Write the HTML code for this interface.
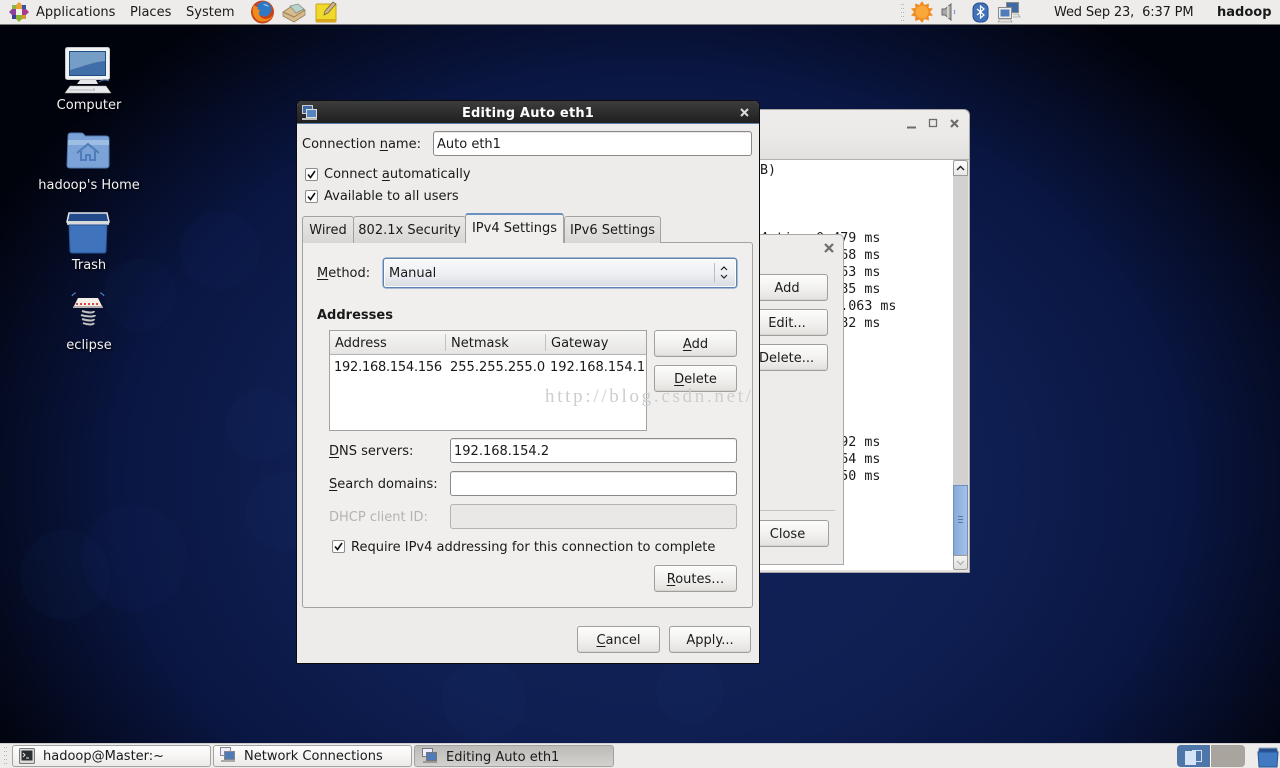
<!DOCTYPE html>
<html><head><meta charset="utf-8"><title>Editing Auto eth1</title>
<style>
*{box-sizing:border-box}
html,body{margin:0;padding:0;width:1280px;height:768px;overflow:hidden}
body{position:relative;font-family:"DejaVu Sans","Liberation Sans",sans-serif;font-size:13px;color:#1a1a1a;background:#0a1538}
.a,.t,.b,.e,svg{position:absolute}
.t{white-space:nowrap;line-height:18px;height:18px;margin-top:2px}
.d{color:#f4f4f4;text-shadow:1px 1px 2px #000;width:178px;left:0;text-align:center}
.b{border:1px solid #a09f9c;border-radius:3px;background:linear-gradient(#fdfdfc,#f1f0ee 55%,#e2e1de);text-align:center;line-height:27px;white-space:nowrap;box-shadow:inset 0 -1px 0 #d5d4d1}
.e{border:1px solid #8b8a88;border-radius:3px;background:#fff;box-shadow:inset 0 1px 0 #e8e8e8}
.m{font-family:"DejaVu Sans Mono","Liberation Mono",monospace;font-size:13.33px}
.tab{position:absolute;top:216px;height:27px;border:1px solid #a3a2a0;border-bottom:0;border-radius:3px 3px 0 0;background:linear-gradient(#e9e8e6,#d8d7d4);line-height:28px;text-align:center;white-space:nowrap}
.cb{position:absolute;width:13px;height:13px;border:1px solid #8d8c8a;border-radius:2px;background:#fff}
.tb{position:absolute;top:745px;height:22px;border:1px solid #a3a2a0;border-radius:3px;background:linear-gradient(#fff,#ecebe9);white-space:nowrap}
u{text-decoration:underline;text-underline-offset:2px}
</style></head><body>

<div class="a" style="left:0;top:0;width:1280px;height:768px;background:radial-gradient(ellipse 740px 570px at 650px 480px,#11225a 0,#0f1f52 45%,#0a1642 72%,#01030c 100%)"></div>
<svg style="left:0;top:0" width="1280" height="768" fill="#2a4080" fill-opacity=".06">
<circle cx="134" cy="558" r="53"/><circle cx="65" cy="575" r="45"/><circle cx="220" cy="250" r="40"/><circle cx="140" cy="295" r="36"/><circle cx="484" cy="700" r="42"/><circle cx="285" cy="512" r="40"/><circle cx="262" cy="425" r="36"/><circle cx="690" cy="690" r="34"/>
</svg>

<!-- top panel -->
<div class="a" style="left:0;top:0;width:1280px;height:25px;background:#edecea;border-bottom:1px solid #7d7c7a"></div>
<svg style="left:8px;top:1px" width="22" height="22" viewBox="0 0 22 22">
<path d="M11 1l3 3v4h-6V4z" fill="#e8a23a"/><path d="M21 11l-3 3h-4V8h4z" fill="#a53c8c"/><path d="M11 21l-3-3v-4h6v4z" fill="#8bb52e"/><path d="M1 11l3-3h4v6H4z" fill="#8b3f9a"/>
<path d="M4 4h4v4H4z" fill="#8fb83a"/><path d="M14 4h4v4h-4z" fill="#3f4fa0"/><path d="M14 14h4v4h-4z" fill="#d49a35"/><path d="M4 14h4v4H4z" fill="#3b3f98"/><path d="M8 8h6v6H8z" fill="#f2efe9"/>
</svg>
<div class="t" style="left:36px;top:2px">Applications</div>
<div class="t" style="left:130px;top:2px">Places</div>
<div class="t" style="left:186px;top:2px">System</div>
<svg style="left:250px;top:0" width="25" height="24" viewBox="0 0 25 24">
<circle cx="12.500" cy="12" r="11.500" fill="#c8431a"/><circle cx="14" cy="9" r="7.500" fill="#2f78c4"/><path d="M4 5c-3 6-1 13 5 16 6 2 12-1 14-6-3 4-8 5-11 3-3-2-4-5-2-8-2 0-3-1-2-3-1 0-2 0-4-2z" fill="#ef8a1c"/><path d="M13 4c3 0 5 1 6 3-2-1-4-1-6-3z" fill="#9fd0ee"/>
</svg>
<svg style="left:282px;top:2px" width="24" height="21" viewBox="0 0 24 21">
<path d="M1 10l9-6 13 4v5l-11 7-11-6z" fill="#d8bb8c" stroke="#9b8056" stroke-width=".8"/><path d="M8 4l8-2 6 5-8 4z" fill="#b9d2cc" stroke="#7f8f86" stroke-width=".8"/><path d="M1 10l11 5 11-7" fill="none" stroke="#9b8056"/>
</svg>
<svg style="left:315px;top:1px" width="23" height="22" viewBox="0 0 23 22">
<rect x="1" y="3" width="20" height="18" rx="1" fill="#f0d92a" stroke="#c8a21a"/><rect x="1" y="18" width="20" height="3" fill="#d9a81f"/><path d="M9 14l1-4L18 1l3 2-8 9z" fill="#c9b68a" stroke="#6b5b3a" stroke-width=".7"/>
</svg>
<svg style="left:900px;top:2px" width="5" height="20" fill="#b5b4b1"><rect x="1" y="2" width="1" height="1"/><rect x="3" y="2" width="1" height="1"/><rect x="1" y="6" width="1" height="1"/><rect x="3" y="6" width="1" height="1"/><rect x="1" y="10" width="1" height="1"/><rect x="3" y="10" width="1" height="1"/><rect x="1" y="14" width="1" height="1"/><rect x="3" y="14" width="1" height="1"/><rect x="1" y="18" width="1" height="1"/><rect x="3" y="18" width="1" height="1"/></svg>
<svg style="left:911px;top:1px" width="22" height="22" viewBox="0 0 22 22"><path d="M11 0l2.500 4L18 2.500l-.5 4.500 4.500.5L19 11l3 3.500-4.500.5.500 4.500-4.500-1.500L11 22l-2.500-3.500L4 20l.5-4.500L0 14.500 3 11 0 7.500 4.500 7 4 2.500 8.500 4z" fill="#f08a1e"/><circle cx="11" cy="11" r="6.500" fill="#f9a63a"/></svg>
<svg style="left:940px;top:2px" width="18" height="20" viewBox="0 0 18 20"><path d="M2 7h3l6-5v16l-6-5H2z" fill="#a9a8a4" stroke="#6a6965"/><path d="M8 4v12" stroke="#dededc" stroke-width="1.500"/><path d="M14 8c1 1 1 3 0 4" fill="none" stroke="#6c8cc0"/></svg>
<svg style="left:972px;top:2px" width="17" height="21" viewBox="0 0 17 21"><rect x="1" y="1" width="15" height="19" rx="6" fill="#3f72b8" stroke="#254f8c"/><path d="M5 7l7 6-3.500 3V4L12 7l-7 6" fill="none" stroke="#fff" stroke-width="1.200"/></svg>
<svg style="left:997px;top:1px" width="24" height="22" viewBox="0 0 24 22"><rect x="9.500" y="1.500" width="12" height="10" fill="#3f6aa5" stroke="#8a8a88"/><rect x="1.500" y="6.500" width="13" height="11" fill="#ecedee" stroke="#8a8a88"/><rect x="3.500" y="8.500" width="9" height="7" fill="#4f7cb8"/><path d="M1 21l2-3h10l2 3z" fill="#e4e4e4" stroke="#8a8a88" stroke-width=".6"/><path d="M16 13h5l2 3h-7" fill="#e4e4e4" stroke="#8a8a88" stroke-width=".6"/></svg>
<div class="t" style="left:1054px;top:2px;letter-spacing:-.15px">Wed Sep 23,&nbsp; 6:37 PM</div>
<div class="t" style="left:1217px;top:2px;font-weight:bold">hadoop</div>

<!-- desktop icons -->
<svg style="left:64px;top:46px" width="48" height="48" viewBox="0 0 48 48">
<rect x="1.500" y="1.500" width="44" height="32" rx="2" fill="#f2f3f4" stroke="#c4c7cb"/><rect x="5.500" y="5.500" width="36" height="24" fill="#3f6ea8" stroke="#1f4b86"/><path d="M6 6h35v9c-12 1-20 5-35 9z" fill="#8fb0d3" opacity=".7"/><path d="M13 38h21l-2-4H16z" fill="#e6e7e8"/><path d="M1 47l5-7h36l5 7z" fill="#e8e9ea" stroke="#a8a8a8" stroke-width=".5"/><path d="M5 44h26M30 42v3" stroke="#b9b9b9"/><path d="M35 36c3-2 6-3 10-1" fill="none" stroke="#3f6ea8"/>
</svg>
<div class="t d" style="top:95px">Computer</div>
<svg style="left:66px;top:131px" width="44" height="38" viewBox="0 0 44 38">
<path d="M2 5c0-2 1-3 3-3h10c2 0 3 1 4 3h21c2 0 3 1 3 3v26c0 2-1 3-3 3H4c-2 0-3-1-3-3z" fill="#7ba3d7" stroke="#4f7bb3"/><path d="M2 9h41v5H2z" fill="#9ebde3"/><path d="M11 22l11-9 11 9M15 20v9h5v-5h4v5h5v-9" fill="none" stroke="#4e7cb8" stroke-width="2"/>
</svg>
<div class="t d" style="top:175px">hadoop's Home</div>
<svg style="left:66px;top:210px" width="44" height="44" viewBox="0 0 44 44">
<path d="M3 3h38l2 9H1z" fill="#234b8c" stroke="#e8e8e8" stroke-width="1.500"/><rect x="1" y="11" width="42" height="4" rx="1" fill="#d8dadc"/><path d="M3 15h38l-1 26c0 1-1 2-2 2H6c-1 0-2-1-2-2z" fill="#3f73bb" stroke="#2a5494"/>
</svg>
<div class="t d" style="top:255px">Trash</div>
<svg style="left:70px;top:291px" width="36" height="36" viewBox="0 0 36 36">
<path d="M3 17L8 7h20l5 10z" fill="#f3eee8"/><path d="M6 13h24" stroke="#e8413a" stroke-width="2" stroke-dasharray="2 2"/><path d="M3 16h30" stroke="#999" stroke-width="1.500"/>
<path d="M12 20c6 2 12 2 12 0M11 24c6 2 14 2 14 0M12 28c6 2 12 2 12 0M13 32c5 2 10 2 11 0" fill="none" stroke="#c0c0c0" stroke-width="2"/>
<path d="M2 5c1-2 3-3 4-3M34 5c-1-2-3-3-4-3" fill="none" stroke="#4f7cb8" stroke-width="1.200"/>
</svg>
<div class="t d" style="top:335px">eclipse</div>

<!-- back window -->
<div class="a" style="left:730px;top:109px;width:240px;height:464px;background:#e6e5e3;border:1px solid #a8a7a5;border-radius:0 6px 0 0"></div>
<div class="a" style="left:730px;top:110px;width:239px;height:50px;border-radius:0 6px 0 0;background:linear-gradient(#edecea,#ebeae8 50%,#e2e1df);border-bottom:1px solid #b4b3b1"></div>
<svg style="left:905px;top:117px" width="55" height="14" stroke="#6d6c6a" fill="none"><path d="M2 10.500h9" stroke-width="2"/><rect x="24.500" y="2.500" width="7" height="7" stroke-width="1.300"/><path d="M46 3l7 7M53 3l-7 7" stroke-width="2.200"/></svg>
<div class="a" style="left:730px;top:160px;width:223px;height:410px;background:#fff"></div>
<div class="a" style="left:953px;top:160px;width:15px;height:410px;background:#d2d1cf"></div>
<div class="a" style="left:953px;top:160px;width:15px;height:16px;background:linear-gradient(#fff,#e8e7e5);border:1px solid #9c9b99;border-radius:3px 3px 0 0"></div>
<svg style="left:956px;top:165px" width="9" height="6" fill="none" stroke="#222" stroke-width="1.400"><path d="M1 5l3.500-3.500L8 5"/></svg>
<div class="a" style="left:953px;top:485px;width:15px;height:71px;background:linear-gradient(90deg,#86a9dc,#a6c1e8);border:1px solid #6f8fbf"></div>
<svg style="left:957px;top:515px" width="7" height="9" stroke="#5577a8"><path d="M1 1.500h5M1 4.500h5M1 7.500h5"/></svg>
<div class="a" style="left:953px;top:555px;width:15px;height:15px;background:linear-gradient(#f5f5f4,#e0dfdd);border:1px solid #9c9b99;border-radius:0 0 3px 3px"></div>
<svg style="left:956px;top:560px" width="9" height="6" fill="none" stroke="#aaa" stroke-width="1.200"><path d="M1 1l3.500 3.500L8 1"/></svg>
<div class="t m" style="left:760px;top:160px">B)</div>
<div class="t m" style="left:760px;top:228px">4 time=0.479 ms</div>
<div class="t m" style="left:760px;top:245px">4 time=0.568 ms</div>
<div class="t m" style="left:760px;top:262px">4 time=0.563 ms</div>
<div class="t m" style="left:760px;top:279px">4 time=0.585 ms</div>
<div class="t m" style="left:760px;top:296px">4 time=0.1.063 ms</div>
<div class="t m" style="left:760px;top:313px">4 time=0.582 ms</div>
<div class="t m" style="left:760px;top:432px">4 time=0.592 ms</div>
<div class="t m" style="left:760px;top:449px">4 time=0.564 ms</div>
<div class="t m" style="left:760px;top:466px">4 time=0.550 ms</div>

<!-- inner dialog -->
<div class="a" style="left:730px;top:234px;width:114px;height:331px;background:#edecea;border:1px solid #a9a8a6;border-radius:0 5px 0 0"></div>
<svg style="left:824px;top:243px" width="10" height="10" stroke="#6d6c6a" stroke-width="2.200"><path d="M1 1l8 8M9 1l-8 8"/></svg>
<div class="b" style="left:730px;top:274px;width:98px;height:27px;padding-left:16px">Add</div>
<div class="b" style="left:730px;top:309px;width:98px;height:27px;padding-left:16px">Edit...</div>
<div class="b" style="left:730px;top:344px;width:98px;height:27px;padding-left:28px;text-align:left">Delete...</div>
<div class="a" style="left:730px;top:510px;width:105px;height:1px;background:#c4c3c1"></div>
<div class="b" style="left:730px;top:520px;width:99px;height:27px;padding-left:16px">Close</div>

<!-- main dialog -->
<div class="a" style="left:296px;top:100px;width:464px;height:564px;background:#edecea;border:1px solid #0c0c0c;border-radius:6px 6px 0 0"></div>
<div class="a" style="left:297px;top:101px;width:462px;height:23px;background:linear-gradient(#3d3d3d,#1f1f1f);border-radius:5px 5px 0 0;border-bottom:1px solid #5b7fa8"></div>
<svg style="left:302px;top:105px" width="16" height="16" viewBox="0 0 16 16"><rect x="0.500" y="0.500" width="10" height="8" fill="#3f6aa5" stroke="#ccc"/><rect x="4.500" y="4.500" width="10" height="8" fill="#5584c0" stroke="#ddd"/><path d="M0 13h15v2H0z" fill="#bbb"/></svg>
<div class="t" style="left:297px;top:103px;width:462px;text-align:center;color:#fff;font-weight:bold;letter-spacing:.2px">Editing Auto eth1</div>
<svg style="left:740px;top:108px" width="9" height="9" stroke="#ddd" stroke-width="2"><path d="M1 1l7 7M8 1l-7 7"/></svg>

<div class="t" style="left:302px;top:134px">Connection <u>n</u>ame:</div>
<div class="e" style="left:433px;top:131px;width:319px;height:25px"></div>
<div class="t" style="left:437px;top:134px">Auto eth1</div>

<div class="cb" style="left:305px;top:168px"></div>
<svg style="left:305px;top:168px" width="13" height="13" fill="none" stroke="#111" stroke-width="1.600"><path d="M3 6.500l2.500 3L10 3"/></svg>
<div class="t" style="left:324px;top:164px">Connect <u>a</u>utomatically</div>
<div class="cb" style="left:305px;top:190px"></div>
<svg style="left:305px;top:190px" width="13" height="13" fill="none" stroke="#111" stroke-width="1.600"><path d="M3 6.500l2.500 3L10 3"/></svg>
<div class="t" style="left:324px;top:186px">Available to all users</div>

<!-- notebook -->
<div class="a" style="left:302px;top:242px;width:451px;height:366px;background:#f0efed;border:1px solid #a3a2a0;border-radius:0 3px 3px 3px"></div>
<div class="tab" style="left:302px;width:52px">Wired</div>
<div class="tab" style="left:353px;width:113px">802.1x Security</div>
<div class="tab" style="left:564px;width:97px">IPv6 Settings</div>
<div class="tab" style="left:465px;top:213px;width:99px;height:30px;background:#f0efed;border-color:#a3a2a0;border-top:2px solid #6a90c0;line-height:28px">IPv4 Settings</div>

<div class="t" style="left:317px;top:263px"><u>M</u>ethod:</div>
<div class="a" style="left:383px;top:258px;width:354px;height:30px;border:1px solid #5e84b2;border-radius:3px;background:linear-gradient(#f8f9fb,#eef0f4 50%,#d8dce2);box-shadow:inset 0 0 0 1px #fff,0 0 0 .5px #5e84b2"></div>
<div class="a" style="left:714px;top:263px;width:1px;height:19px;background:#b9bcc0"></div>
<svg style="left:719px;top:265px" width="10" height="15" fill="none" stroke="#222" stroke-width="1.200"><path d="M2 5l3-3 3 3M2 10l3 3 3-3"/></svg>
<div class="t" style="left:389px;top:263px">Manual</div>

<div class="t" style="left:317px;top:305px;font-weight:bold">Addresses</div>
<div class="a" style="left:329px;top:330px;width:318px;height:101px;background:#fff;border:1px solid #a3a2a0"></div>
<div class="a" style="left:330px;top:331px;width:316px;height:24px;background:linear-gradient(#f6f6f5,#e6e5e3);border-bottom:1px solid #b4b3b1"></div>
<div class="a" style="left:445px;top:334px;width:1px;height:17px;background:#c4c3c1"></div>
<div class="a" style="left:545px;top:334px;width:1px;height:17px;background:#c4c3c1"></div>
<div class="t" style="left:335px;top:333px">Address</div>
<div class="t" style="left:451px;top:333px">Netmask</div>
<div class="t" style="left:551px;top:333px">Gateway</div>
<div class="t" style="left:334px;top:357px;letter-spacing:-.25px">192.168.154.156</div>
<div class="t" style="left:450px;top:357px">255.255.255.0</div>
<div class="t" style="left:550px;top:357px">192.168.154.1</div>

<div class="b" style="left:654px;top:330px;width:83px;height:27px"><u>A</u>dd</div>
<div class="b" style="left:654px;top:365px;width:83px;height:27px"><u>D</u>elete</div>

<div class="t" style="left:329px;top:441px"><u>D</u>NS servers:</div>
<div class="e" style="left:450px;top:438px;width:287px;height:25px"></div>
<div class="t" style="left:454px;top:441px">192.168.154.2</div>
<div class="t" style="left:329px;top:474px"><u>S</u>earch domains:</div>
<div class="e" style="left:450px;top:471px;width:287px;height:25px"></div>
<div class="t" style="left:329px;top:507px;color:#b4b3b1">DHCP client ID:</div>
<div class="e" style="left:450px;top:504px;width:287px;height:25px;background:#e9e8e6;border-color:#b4b3b1;box-shadow:none"></div>

<div class="cb" style="left:332px;top:540px"></div>
<svg style="left:332px;top:540px" width="13" height="13" fill="none" stroke="#111" stroke-width="1.600"><path d="M3 6.500l2.500 3L10 3"/></svg>
<div class="t" style="left:351px;top:537px">Require IPv4 addressing for this connection to complete</div>
<div class="b" style="left:654px;top:565px;width:83px;height:27px"><u>R</u>outes…</div>
<div class="b" style="left:577px;top:626px;width:83px;height:27px"><u>C</u>ancel</div>
<div class="b" style="left:669px;top:626px;width:82px;height:27px">Apply...</div>

<div class="t" style="left:545px;top:388px;margin-top:0;font-family:'Liberation Serif',serif;font-size:19px;letter-spacing:2.700px;color:#cdcdcd">http://blog.csdn.net/</div>

<!-- bottom panel -->
<div class="a" style="left:0;top:743px;width:1280px;height:25px;background:#edecea;border-top:1px solid #d0cfcd"></div>
<svg style="left:3px;top:746px" width="5" height="20" fill="#b5b4b1"><rect x="1" y="1" width="1" height="1"/><rect x="3" y="1" width="1" height="1"/><rect x="1" y="5" width="1" height="1"/><rect x="3" y="5" width="1" height="1"/><rect x="1" y="9" width="1" height="1"/><rect x="3" y="9" width="1" height="1"/><rect x="1" y="13" width="1" height="1"/><rect x="3" y="13" width="1" height="1"/><rect x="1" y="17" width="1" height="1"/><rect x="3" y="17" width="1" height="1"/></svg>
<div class="tb" style="left:12px;width:199px"></div>
<div class="tb" style="left:213px;width:199px"></div>
<div class="tb" style="left:414px;width:200px;background:linear-gradient(#bdbbb7,#d3d1cd)"></div>
<svg style="left:19px;top:748px" width="16" height="16"><rect x="0.500" y="0.500" width="15" height="15" rx="1" fill="#dcdbd9" stroke="#777"/><rect x="2.500" y="2.500" width="11" height="10" fill="#2b2f33"/><path d="M4 5l2 2-2 2" stroke="#eee" fill="none"/><path d="M7 10h3" stroke="#eee"/></svg>
<svg style="left:220px;top:747px" width="16" height="16"><rect x="0.500" y="0.500" width="10" height="8" fill="#eef" stroke="#888"/><rect x="4.500" y="4.500" width="10" height="8" fill="#4f7cb8" stroke="#888"/><path d="M1 14h14" stroke="#aaa" stroke-width="2"/></svg>
<svg style="left:422px;top:748px" width="16" height="16"><rect x="0.500" y="0.500" width="10" height="8" fill="#eef" stroke="#777"/><rect x="4.500" y="4.500" width="10" height="8" fill="#4f7cb8" stroke="#777"/><path d="M1 14h14" stroke="#999" stroke-width="2"/></svg>
<div class="t" style="left:43px;top:746px">hadoop@Master:~</div>
<div class="t" style="left:244px;top:746px">Network Connections</div>
<div class="t" style="left:446px;top:747px">Editing Auto eth1</div>

<div class="a" style="left:1177px;top:745px;width:68px;height:22px;background:#a9a49e;border-radius:4px"></div>
<div class="a" style="left:1177px;top:745px;width:34px;height:22px;background:#4f76a8;border-radius:4px 0 0 4px;border-right:1px solid #fff"></div>
<div class="a" style="left:1192px;top:750px;width:10px;height:12px;background:#4f76a8;border:1px solid #cfe0f5"></div>
<div class="a" style="left:1185px;top:751px;width:11px;height:14px;background:#d4e3f6"></div>
<svg style="left:1257px;top:746px" width="22" height="22" viewBox="0 0 22 22"><path d="M2 2h18l1 5H1z" fill="#274f8f" stroke="#9ab"/><path d="M1 6h20l-1 15H2z" fill="#4079c0" stroke="#2a5494"/></svg>
</body></html>
